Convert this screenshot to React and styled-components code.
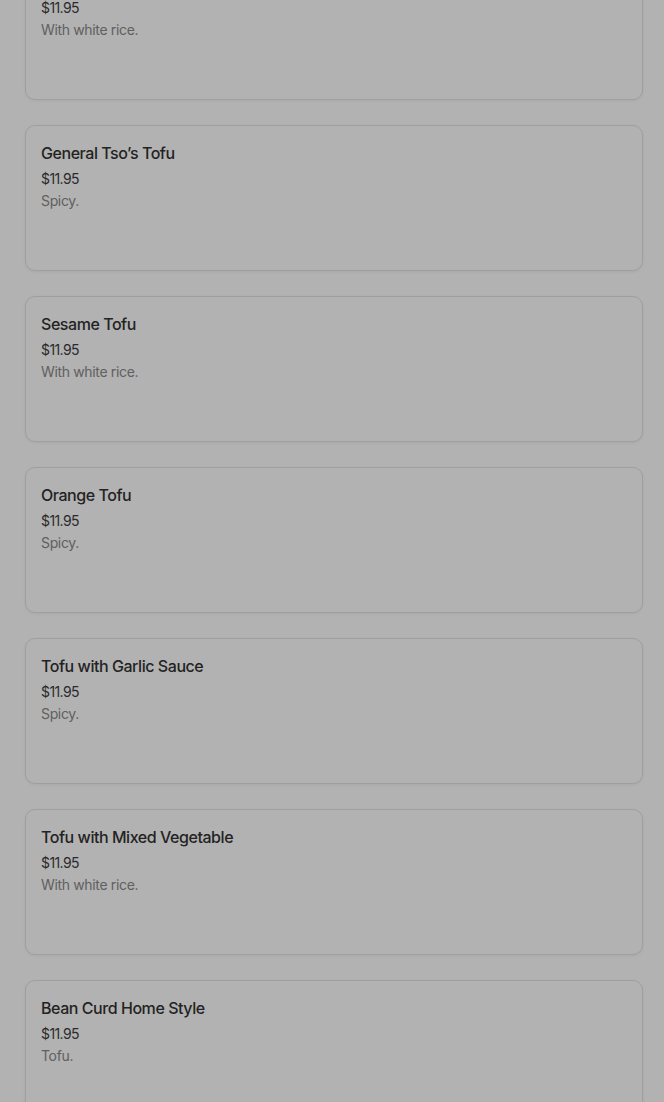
import React from "react";
import styled, { createGlobalStyle } from "styled-components";

const Global = createGlobalStyle`
  html, body { margin: 0; padding: 0; background: #ffffff; }
  body { font-family: Inter, Roboto, "Noto Sans", sans-serif; overflow: hidden; }
`;

const Page = styled.div`
  height: 1102px;
  overflow: hidden;
`;

const List = styled.div`
  display: flex;
  flex-direction: column;
  gap: 25px;
  margin: -46px 21px 0 25px;
`;

const Card = styled.div`
  box-sizing: border-box;
  min-height: 146px;
  padding: 15px 15px;
  border: 1px solid #e4e4e4;
  border-radius: 10px;
  background: #ffffff;
  box-shadow: 0 1px 3px rgba(0, 0, 0, 0.06);
  display: flex;
  flex-direction: column;
`;

const Title = styled.div`
  font-size: 16px;
  line-height: 24px;
  font-weight: 500;
  color: #333333;
  letter-spacing: -0.45px;
`;

const Price = styled.div`
  margin-top: 4px;
  font-size: 14px;
  line-height: 20px;
  color: #3d3d3d;
  letter-spacing: -0.6px;
`;

const Desc = styled.div`
  margin-top: 2px;
  font-size: 14px;
  line-height: 20px;
  color: #8a8a8a;
  letter-spacing: -0.35px;
`;

const Scrim = styled.div`
  position: fixed;
  inset: 0;
  background: rgba(0, 0, 0, 0.3);
`;

const items = [
  { name: "Tofu with Broccoli", desc: "With white rice." },
  { name: "General Tso’s Tofu", desc: "Spicy." },
  { name: "Sesame Tofu", desc: "With white rice." },
  { name: "Orange Tofu", desc: "Spicy." },
  { name: "Tofu with Garlic Sauce", desc: "Spicy." },
  { name: "Tofu with Mixed Vegetable", desc: "With white rice." },
  { name: "Bean Curd Home Style", desc: "Tofu." },
];

export default function App() {
  return (
    <Page>
      <Global />
      <List>
        {items.map((it) => (
          <Card key={it.name}>
            <Title>{it.name}</Title>
            <Price>$11.95</Price>
            <Desc>{it.desc}</Desc>
          </Card>
        ))}
      </List>
      <Scrim />
    </Page>
  );
}
